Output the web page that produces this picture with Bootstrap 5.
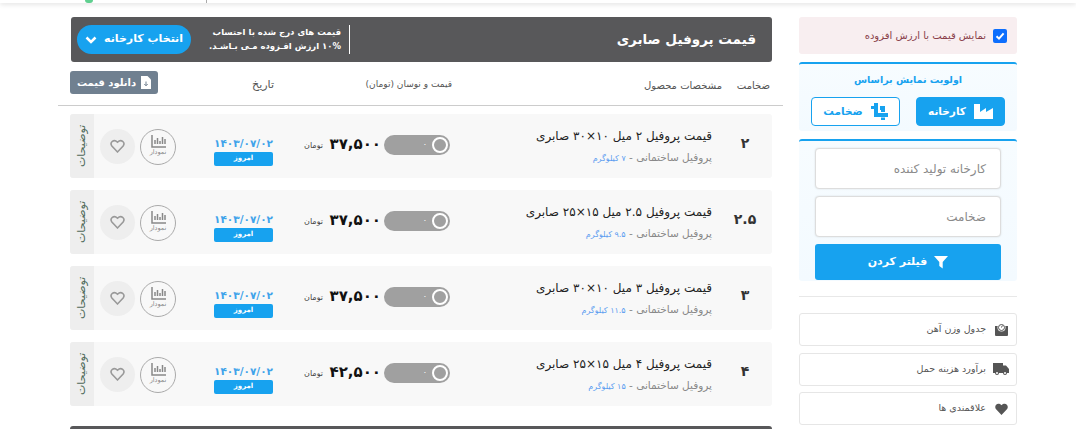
<!DOCTYPE html>
<html lang="fa" dir="rtl">
<head>
  <meta charset="UTF-8">
  <title>قیمت پروفیل صابری</title>
  <link href="https://cdn.jsdelivr.net/npm/bootstrap@5.3.0/dist/css/bootstrap.min.css" rel="stylesheet">
  <style>
    html, body { height: 429px; overflow: hidden; }
    body { font-family: "DejaVu Sans", "Noto Sans", sans-serif; color: #333; background: #fff; }
    .top-strip { height: 3px; box-shadow: 0 1px 5px rgba(0,0,0,.16); padding-left: 85px; }
    .strip-dot { width: 8px; height: 3px; background: #5fcf8f; border-radius: 0 0 4px 4px; }
    .strip-line { width: 1px; height: 3px; background: #aaa; margin-left: 113px; }
    .page-wrap { padding: 14px 59px 0 0; gap: 16px; }
    .side-col { width: 218px; flex: none; }
    .main-col { width: 725px; flex: none; }
    .main-inner { padding: 0 11px 0 12px; }

    .vat-box { height: 37px; background: #f8eef0; border-radius: 3px; color: #8a3f4a; font-size: 10px; padding: 0 10px; gap: 7px; margin-bottom: 8px; }
    .vat-check { width: 14px; height: 14px; background: #0d6efd; border-radius: 2px; flex: none; }
    .blue-box { border-top: 2px solid #17a2ef; background: linear-gradient(#f7fcff, #f3faff); border-radius: 3px; margin-bottom: 8px; }
    .prio-box { height: 69px; padding: 9px 12px 0; }
    .prio-title { color: #17a2ef; font-size: 9.5px; font-weight: 600; text-align: center; margin-bottom: 10px; }
    .prio-btn { width: 89px; height: 29px; border-radius: 4px; font-size: 10.5px; font-weight: 700; gap: 8px; border: 1px solid #17a2ef; }
    .prio-on { background: #17a2ef; color: #fff; }
    .prio-off { background: #fff; color: #17a2ef; }
    .filter-box { height: 142px; padding: 7px 16px 0; margin-bottom: 15px; }
    .filter-input { height: 41px; border: 1px solid #ddd; border-radius: 4px; background: #fff; color: #8a8a8a; font-size: 12px; padding: 0 14px; margin-bottom: 7px; box-shadow: 0 0 2px rgba(0,0,0,.12); display: flex; align-items: center; }
    .filter-btn { height: 36px; background: #17a2ef; color: #fff; border-radius: 3px; font-size: 11px; font-weight: 700; gap: 7px; }
    .side-rule { border-top: 1px solid #e8e8e8; margin-bottom: 16px; }
    .side-link { height: 33px; border: 1px solid #e6e6e6; border-radius: 3px; padding: 0 7px 0 0; margin-bottom: 6.5px; font-size: 9.5px; color: #555; gap: 7px; }
    .side-icon { width: 16px; flex: none; display: flex; justify-content: center; }

    .title-bar { height: 45px; background: #58585a; border-radius: 3px; color: #fff; padding: 0 16px 0 6px; margin-bottom: 8px; margin-left: 1px; }
    .title-bar h1 { font-size: 13.5px; font-weight: 700; margin: 0; flex: 1; }
    .note-text { border-right: 1px solid #fff; padding-right: 8px; margin-left: 18px; font-size: 8.5px; line-height: 14px; font-weight: 600; height: 29px; white-space: nowrap; }
    .factory-pick { width: 114px; height: 29px; background: #17a2ef; border-radius: 15px; font-size: 11px; font-weight: 700; gap: 7px; }

    .head-row { height: 25px; font-size: 10px; color: #555; }
    .head-line { border-top: 1px solid #ccc; margin: 10px 0 8px; }
    .head-cell { padding-top: 5px; white-space: nowrap; }
    .head-size { width: 50px; flex: none; padding-right: 2px; }
    .head-spec { width: 270px; flex: none; }
    .head-price { width: 178px; flex: none; font-size: 9px; }
    .head-date { flex: none; font-size: 11px; }
    .get-price { width: 88px; height: 23px; background: #708090; color: #fff; border-radius: 3px; font-size: 10px; font-weight: 700; gap: 5px; flex: none; margin-right: auto; }

    .price-row { height: 64px; background: #f8f8f8; border-radius: 3px; margin-bottom: 12px; }
    .size-num { width: 60px; flex: none; padding-left: 6px; padding-bottom: 6px; font-size: 14px; font-weight: 700; color: #333; text-align: center; }
    .spec-name { font-size: 12px; color: #222; line-height: 18px; margin-bottom: 5px; white-space: nowrap; }
    .spec-sub { font-size: 10.5px; color: #888; white-space: nowrap; }
    .spec-sub span { color: #5c9df0; font-size: 8px; }
    .spec-cell { flex: 1; }
    .pill-switch { width: 66px; height: 20px; background: #a0a0a0; border-radius: 10px; padding: 0 2px; color: #fff; font-size: 8px; gap: 5px; flex: none; margin-bottom: 2px; }
    .pill-knob { width: 16px; height: 16px; border: 2px solid #fff; border-radius: 50%; flex: none; }
    .price-num { width: 55px; flex: none; padding-right: 3px; padding-bottom: 4px; font-size: 15px; font-weight: 700; color: #111; white-space: nowrap; }
    .price-unit { font-size: 8px; color: #444; width: 31px; flex: none; padding-right: 6px; white-space: nowrap; }
    .date-cell { width: 59px; flex: none; margin-right: 25px; padding-top: 9px; }
    .date-num { color: #3fa3ea; font-size: 10.500px; font-weight: 700; text-align: center; line-height: 14px; white-space: nowrap; }
    .date-today { height: 14px; background: #17a2ef; color: #fff; border-radius: 2px; font-size: 7px; font-weight: 700; line-height: 13px; text-align: center; margin-top: 2px; }
    .chart-btn { width: 36px; height: 36px; border: 1px solid #aaa; border-radius: 50%; color: #888; font-size: 6.500px; margin-right: 38px; margin-top: 1px; flex: none; }
    .heart-btn { width: 35px; height: 35px; border-radius: 50%; background: #eee; margin-right: 5px; margin-left: 6px; flex: none; }
    .more-tab { width: 24px; height: 64px; background: #eee; flex: none; color: #4f6a5a; font-size: 11px; writing-mode: vertical-rl; transform: rotate(180deg); border-radius: 0 3px 3px 0; }
    .bottom-bar { height: 20px; background: #58585a; border-radius: 3px; margin-top: 20px; }
  </style>
</head>
<body>
  <div class="top-strip d-flex" dir="ltr"><span class="strip-dot"></span><span class="strip-line"></span></div>
  <div class="d-flex page-wrap">
    <!-- sidebar -->
    <aside class="side-col">
      <div class="vat-box d-flex align-items-center">
        <span class="vat-check d-flex align-items-center justify-content-center">
          <svg width="10" height="10" viewBox="0 0 10 10"><path d="M1.500 5.200 4 7.600 8.600 2.400" fill="none" stroke="#fff" stroke-width="2"/></svg>
        </span>
        <span>نمایش قیمت با ارزش افزوده</span>
      </div>
      <div class="blue-box prio-box">
        <div class="prio-title">اولویت نمایش براساس</div>
        <div class="d-flex justify-content-between">
          <div class="prio-btn prio-on d-flex align-items-center justify-content-center">
            <svg width="19" height="15" viewBox="0 0 19 15"><path d="M0 0h6v8l6-4v4l7-4v11H0z" fill="#fff"/></svg>
            <span>کارخانه</span>
          </div>
          <div class="prio-btn prio-off d-flex align-items-center justify-content-center">
            <svg width="17" height="17" viewBox="0 0 17 17"><path d="M3 0h4v10h10v4H3v-8H0V3h3zM9 3h5v6h-4V7H9zM10 14.500h4V17h-4z" fill="#17a2ef"/></svg>
            <span>ضخامت</span>
          </div>
        </div>
      </div>
      <div class="blue-box filter-box">
        <div class="filter-input">کارخانه تولید کننده</div>
        <div class="filter-input">ضخامت</div>
        <div class="filter-btn d-flex align-items-center justify-content-center">
          <svg width="14" height="14" viewBox="0 0 14 14"><path d="M0 1h14L8.700 7v6.500L5.300 11V7z" fill="#fff"/></svg>
          <span>فیلتر کردن</span>
        </div>
      </div>
      <div class="side-rule"></div>
      <div class="side-link d-flex align-items-center">
        <span class="side-icon"><svg width="13" height="13" viewBox="0 0 13 13"><path d="M0 3h13v9a1 1 0 0 1-1 1H1a1 1 0 0 1-1-1z" fill="#555"/><circle cx="6.500" cy="4.500" r="4" fill="#fff"/><circle cx="6.500" cy="4.500" r="3" fill="none" stroke="#555"/><path d="M6.500 4.500 7.300 2.500" stroke="#555"/></svg></span>
        <span>جدول وزن آهن</span>
      </div>
      <div class="side-link d-flex align-items-center">
        <span class="side-icon"><svg width="16" height="12" viewBox="0 0 16 12"><path d="M0 0h10v2.500h3l3 3.500v4h-2a2 2 0 0 1-4 0H6a2 2 0 0 1-4 0H0z" fill="#555"/><circle cx="4" cy="10" r="1" fill="#fff"/><circle cx="12" cy="10" r="1" fill="#fff"/></svg></span>
        <span>برآورد هزینه حمل</span>
      </div>
      <div class="side-link d-flex align-items-center">
        <span class="side-icon"><svg width="13" height="12" viewBox="0 0 24 22"><path d="M12 22 2 11.500C-3 5 5-3 12 4c7-7 15 1 10 7.500z" fill="#555"/></svg></span>
        <span>علاقمندی ها</span>
      </div>
    </aside>

    <!-- main -->
    <main class="main-col">
      <div class="main-inner">
        <div class="title-bar d-flex align-items-center">
          <h1>قیمت پروفیل صابری</h1>
          <div class="note-text">قیمت های درج شده با احتساب<br>۱۰% ارزش افـزوده مـی بـاشـد.</div>
          <div class="factory-pick d-flex align-items-center justify-content-center">
            <span>انتخاب کارخانه</span>
            <svg width="12" height="8" viewBox="0 0 12 8"><path d="M1.500 1.500 6 6l4.500-4.500" fill="none" stroke="#fff" stroke-width="2.500"/></svg>
          </div>
        </div>
        <div class="head-row d-flex align-items-center">
          <div class="head-cell head-size">ضخامت</div>
          <div class="head-cell head-spec">مشخصات محصول</div>
          <div class="head-cell head-price">قیمت و نوسان (تومان)</div>
          <div class="head-cell head-date">تاریخ</div>
          <div class="get-price d-flex align-items-center justify-content-center">
            <svg width="10" height="13" viewBox="0 0 10 13"><path d="M0 0h6.500L10 3.500V13H0z" fill="#fff"/><path d="M5 5.500v4M3.300 8 5 9.800 6.700 8" fill="none" stroke="#708090"/></svg>
            <span>دانلود قیمت</span>
          </div>
        </div>
      </div>
      <div class="head-line"></div>
      <div class="main-inner" id="rows"></div>
    </main>
  </div>
  <script>
    const items = [
      ["۲", "قیمت پروفیل ۲ میل ۱۰×۳۰ صابری", "۷ کیلوگرم", "۳۷,۵۰۰"],
      ["۲.۵", "قیمت پروفیل ۲.۵ میل ۱۵×۲۵ صابری", "۹.۵ کیلوگرم", "۳۷,۵۰۰"],
      ["۳", "قیمت پروفیل ۳ میل ۱۰×۳۰ صابری", "۱۱.۵ کیلوگرم", "۳۷,۵۰۰"],
      ["۴", "قیمت پروفیل ۴ میل ۱۵×۲۵ صابری", "۱۵ کیلوگرم", "۴۲,۵۰۰"]
    ];
    const rowsBox = document.getElementById("rows");
    rowsBox.innerHTML = items.map(it => `
      <div class="price-row d-flex align-items-center">
        <div class="size-num">${it[0]}</div>
        <div class="spec-cell">
          <div class="spec-name">${it[1]}</div>
          <div class="spec-sub">پروفیل ساختمانی - <span>${it[2]}</span></div>
        </div>
        <div class="pill-switch d-flex align-items-center"><span class="pill-knob"></span><span>۰</span></div>
        <div class="price-num">${it[3]}</div>
        <div class="price-unit">تومان</div>
        <div class="date-cell">
          <div class="date-num">۱۴۰۳/۰۷/۰۲</div>
          <div class="date-today">امروز</div>
        </div>
        <div class="chart-btn d-flex flex-column align-items-center justify-content-center">
          <svg width="15" height="13" viewBox="0 0 15 13"><path d="M1 0v12h14M4 9V5M6.500 9V3M9 9V6M11.500 9V2M14 9V4" fill="none" stroke="#888" stroke-width="1.500"/></svg>
          <span>نمودار</span>
        </div>
        <div class="heart-btn d-flex align-items-center justify-content-center">
          <svg width="15" height="14" viewBox="0 0 24 22"><path d="M12 20.500 3 11C-1 5.500 6-1 12 5c6-6 13 .5 9 6z" fill="none" stroke="#999" stroke-width="2.500"/></svg>
        </div>
        <div class="more-tab d-flex align-items-center justify-content-center">توضیحات</div>
      </div>`).join("") + '<div class="bottom-bar"></div>';
  </script>
  <script src="https://cdn.jsdelivr.net/npm/bootstrap@5.3.0/dist/js/bootstrap.bundle.min.js"></script>
</body>
</html>
